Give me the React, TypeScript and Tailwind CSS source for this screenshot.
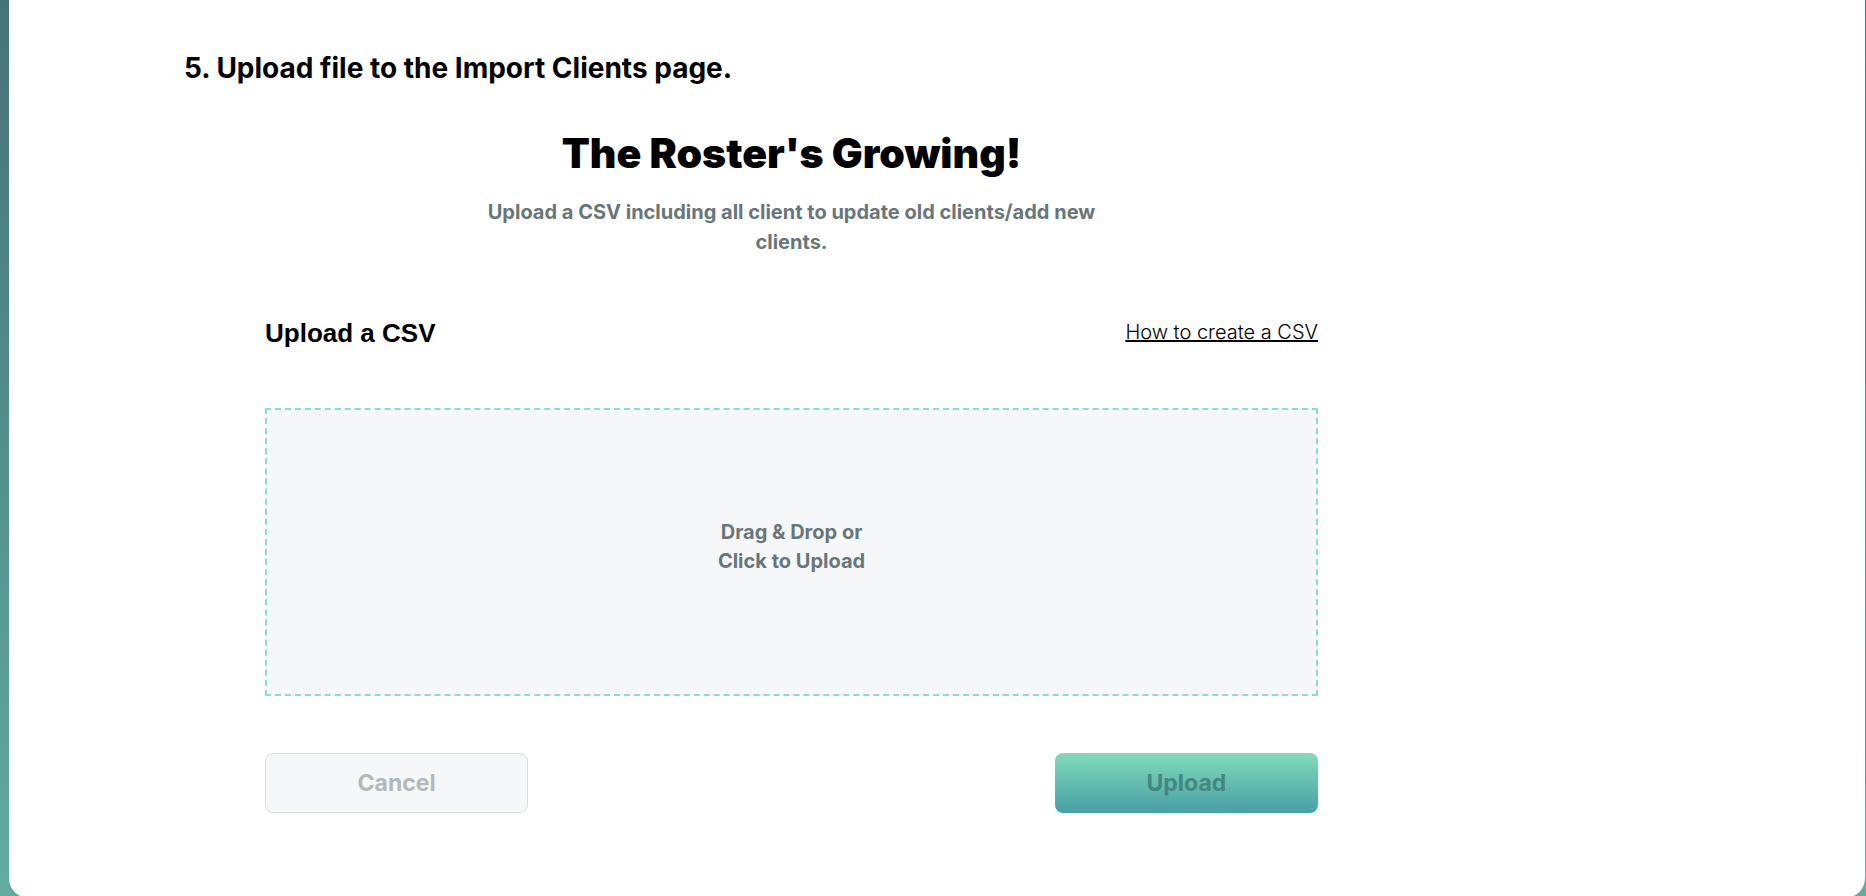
export default function App() {
  return (
    <div className="h-screen overflow-hidden bg-linear-to-b from-[#47727a] to-[#62aca1] pl-[9px] pr-px font-['Inter',sans-serif] text-black">
      <main className="min-h-[calc(100vh+2px)] rounded-b-[20px] bg-white pt-12">
        <div className="ml-[175px] max-w-[1223px]">
          <h2 className="text-[28px] leading-10 font-[650]">
            5. Upload file to the Import Clients page.
          </h2>

          <section className="mt-[41px] mr-20 ml-[81px] max-w-[1053px]">
            <header className="text-center">
              <h1 className="text-[41px] leading-12 font-black">
                The Roster's Growing!
              </h1>
              <p className="mx-auto mt-5 max-w-[620px] text-xl leading-[30px] font-[650] text-[#687679]">
                Upload a CSV including all client to update old clients/add new clients.
              </p>
            </header>

            <div className="mt-[60px] flex items-start justify-between">
              <label
                htmlFor="csv-drop"
                className="font-['Liberation_Sans',sans-serif] text-[26px] leading-8 font-bold"
              >
                Upload a CSV
              </label>
              <a href="#create-csv" className="text-xl leading-[30px] font-[350] underline">
                How to create a CSV
              </a>
            </div>

            <button
              id="csv-drop"
              type="button"
              className="mt-[59px] block h-[288px] w-full border-2 border-dashed border-[#8adbd0] bg-[#f5f7f9] pb-[10px] text-xl leading-[29px] font-[650] text-[#687679]"
            >
              Drag &amp; Drop or
              <br />
              Click to Upload
            </button>

            <div className="mt-[57px] flex justify-between">
              <button
                type="button"
                className="h-[60px] w-1/4 rounded-lg border border-[#dcdedf] bg-[#f5f7f9] text-[23px] font-[650] text-[#b5b7b8]"
              >
                Cancel
              </button>
              <button
                type="button"
                className="h-[60px] w-1/4 rounded-lg bg-linear-to-b from-[#81dcba] to-[#489fa6] text-[23px] font-[650] text-[#45877e]"
              >
                Upload
              </button>
            </div>
          </section>
        </div>
      </main>
    </div>
  );
}
